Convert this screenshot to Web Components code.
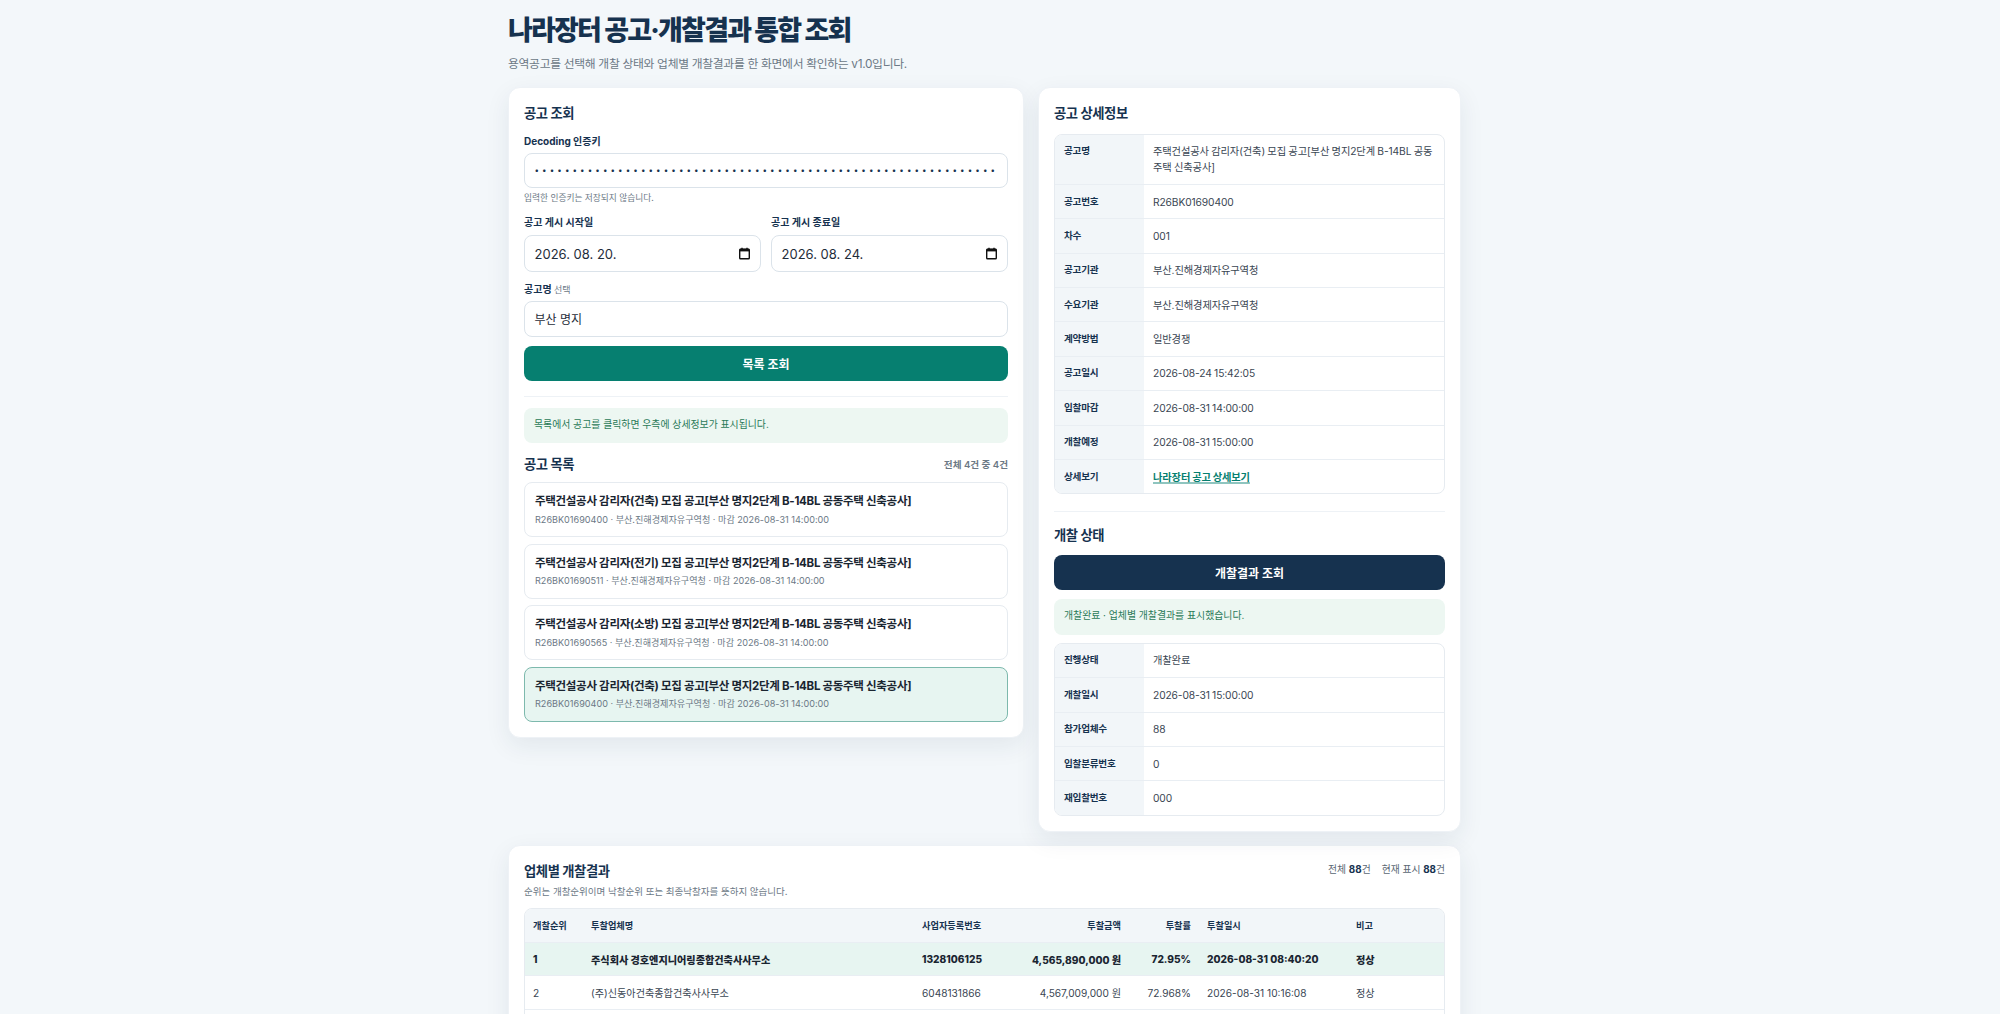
<!doctype html>
<html lang="ko">
<head>
<meta charset="utf-8">
<title>나라장터 공고·개찰결과 통합 조회</title>
<style>
  html { overflow: hidden; }
  body {
    margin: 0;
    background: #f3f7fa;
    color: #1f2d3a;
    font-family: Inter, "Noto Sans CJK KR", sans-serif;
    font-size: 11.5px;
  }
</style>
</head>
<body>
<app-page></app-page>

<script>
class BaseElement extends HTMLElement {
  constructor() {
    super()
    this.attachShadow({mode: 'open'})
  }

  connectedCallback() {
    this.shadowRoot.innerHTML = `<style>${this.constructor.styles}</style>${this.render()}`
  }

  render() {
    return '<slot></slot>'
  }
}

const esc = (text) => String(text).replace(/&/g, '&amp;').replace(/</g, '&lt;')

class UiCard extends BaseElement {
  static styles = `
    :host {
      display: block;
      box-sizing: border-box;
      padding: 15px;
      background: #fff;
      border-radius: 12px;
      border: 1px solid #eef2f6;
      box-shadow: 0 8px 24px rgba(22, 50, 79, .08);
    }
  `
}

class SectionTitle extends BaseElement {
  static styles = `
    :host {
      display: block;
      color: #16324f;
      font-size: 13.3px;
      font-weight: 700;
      line-height: 20px;
      letter-spacing: -.4px;
    }
  `
}

class FieldLabel extends BaseElement {
  static styles = `
    :host {
      display: block;
      color: #16324f;
      font-size: 10px;
      font-weight: 700;
      line-height: 14px;
      margin-bottom: 5px;
    }
    ::slotted(small) { color: #6b7885; font-size: 9px; font-weight: 400; }
  `
}

class TextBox extends BaseElement {
  static styles = `
    :host {
      display: flex;
      align-items: center;
      justify-content: space-between;
      box-sizing: border-box;
      height: 35.5px;
      padding: 0 9.5px;
      background: #fff;
      border: 1px solid #dbe3ea;
      border-radius: 8px;
      color: #1f2d3a;
      font-size: 12px;
    }
    :host([kind="date"]) { height: 37px; margin-top: 6px; font-size: 13px; }
    svg { display: block; flex: none; }
    input {
      width: 100%;
      border: 0;
      padding: 0;
      outline: 0;
      font: 8px Inter, sans-serif;
      letter-spacing: 3.1px;
      color: #16324f;
      background: none;
    }
  `

  render() {
    const kind = this.getAttribute('kind')
    if (kind === 'password') {
      return `<input type="password" readonly value="${'x'.repeat(120)}">`
    }
    if (kind === 'date') {
      return `<slot></slot>
        <svg width="13" height="13" viewBox="0 0 13 13" fill="none" stroke="#111" stroke-width="1.4">
          <rect x="1.7" y="2.2" width="9.6" height="9.6" rx=".8"/>
          <rect x="1.7" y="1.8" width="9.6" height="2.6" fill="#111" stroke="none"/>
          <path d="M4 .8v1.6M9 .8v1.6"/>
        </svg>`
    }
    return '<slot></slot>'
  }
}

class NoticeBox extends BaseElement {
  static styles = `
    :host {
      display: block;
      box-sizing: border-box;
      height: 35.5px;
      padding: 8px 10px;
      background: #edf7f2;
      border-radius: 8px;
      color: #2a7a58;
      font-size: 9.9px;
      line-height: 16px;
    }
  `
}

class ActionButton extends BaseElement {
  static styles = `
    :host { display: block; }
    button {
      display: block;
      width: 100%;
      height: 35px;
      border: 0;
      border-radius: 8px;
      background: var(--btn, #067f70);
      color: #fff;
      font: 700 12px Inter, "Noto Sans CJK KR", sans-serif;
    }
  `

  render() {
    return '<button type="button"><slot></slot></button>'
  }
}

class NoticeItem extends BaseElement {
  static styles = `
    :host {
      display: block;
      box-sizing: border-box;
      height: 55px;
      padding: 9px 10px;
      background: #fff;
      border: 1px solid #e6ebf0;
      border-radius: 8px;
    }
    :host([selected]) { background: #e7f5f1; border-color: #7db9ad; }
    .name { color: #1a2531; font-size: 11.5px; font-weight: 700; line-height: 18px; letter-spacing: -.3px; }
    .meta { color: #6b7885; font-size: 9.1px; line-height: 14px; margin-top: 2.5px; }
  `

  render() {
    const name = esc(this.getAttribute('name'))
    const meta = esc(this.getAttribute('meta'))
    return `<div class="name">${name}</div><div class="meta">${meta}</div>`
  }
}

class InfoTable extends BaseElement {
  static styles = `
    :host {
      display: block;
      overflow: hidden;
      border: 1px solid #e6ebf0;
      border-radius: 8px;
      background: #fff;
    }
  `
}

class InfoRow extends BaseElement {
  static styles = `
    :host {
      display: grid;
      grid-template-columns: 89px 1fr;
      border-bottom: 1px solid #e9eef3;
    }
    :host(:last-child) { border-bottom: 0; }
    .key {
      padding: 8.7px 9px;
      background: #f2f6f9;
      color: #16324f;
      font-size: 9.6px;
      font-weight: 700;
      line-height: 16px;
      letter-spacing: -.25px;
    }
    .val {
      padding: 8.7px 9px;
      color: #3a4653;
      font-size: 10.25px;
      line-height: 16px;
      letter-spacing: -.12px;
      word-spacing: -.4px;
    }
    ::slotted(a) {
      color: #067f70;
      font-weight: 700;
      text-decoration: underline;
      text-decoration-color: rgba(6, 127, 112, .45);
      text-decoration-thickness: 2px;
    }
  `

  render() {
    return `<div class="key">${esc(this.getAttribute('key'))}</div><div class="val"><slot></slot></div>`
  }
}

class ResultTable extends BaseElement {
  static styles = `
    :host {
      display: block;
      overflow: hidden;
      border: 1px solid #e6ebf0;
      border-radius: 8px;
    }
    table { width: 100%; border-collapse: collapse; table-layout: fixed; }
    th, td {
      box-sizing: border-box;
      height: 33.8px;
      padding: 0 8px;
      border-bottom: 1px solid #e9eef3;
      text-align: left;
      font-size: 10.15px;
      white-space: nowrap;
    }
    th { height: 33px; background: #f2f6f9; color: #16324f; font-size: 9.2px; font-weight: 700; }
    td { color: #3a4653; }
    tr.top td { background: #e7f5f1; color: #1a2531; font-weight: 800; }
    .num { text-align: right; }
  `

  render() {
    const cols = [58, 331, 100, 115, 70, 149]
    const heads = ['개찰순위', '투찰업체명', '사업자등록번호', '투찰금액', '투찰률', '투찰일시', '비고']
    const rows = [
      ['1', '주식회사 경호엔지니어링종합건축사사무소', '1328106125', '4,565,890,000 원', '72.95%', '2026-08-31 08:40:20', '정상'],
      ['2', '(주)신동아건축종합건축사사무소', '6048131866', '4,567,009,000 원', '72.968%', '2026-08-31 10:16:08', '정상'],
      ['', '', '', '', '', '', ''],
    ]
    const isNum = (i) => i === 3 || i === 4
    return `<table>
      <colgroup>${cols.map((w) => `<col style="width:${w}px">`).join('')}<col></colgroup>
      <tr>${heads.map((h, i) => `<th class="${isNum(i) ? 'num' : ''}">${h}</th>`).join('')}</tr>
      ${rows.map((row, r) => `<tr class="${r === 0 ? 'top' : ''}">
        ${row.map((c, i) => `<td class="${isNum(i) ? 'num' : ''}">${esc(c)}</td>`).join('')}
      </tr>`).join('')}
    </table>`
  }
}

class AppPage extends BaseElement {
  static styles = `
    :host {
      display: block;
      box-sizing: border-box;
      width: 953px;
      margin-left: 508px;
      padding-top: 13px;
    }
    h1 {
      margin: 0;
      color: #16324f;
      font-size: 27px;
      font-weight: 800;
      line-height: 36px;
      letter-spacing: -1.8px;
    }
    .sub { margin: 6px 0 0; color: #6b7885; font-size: 11.8px; line-height: 18px; height: 19px; letter-spacing: -.31px; }
    .columns {
      display: grid;
      grid-template-columns: 516px 423px;
      gap: 14px;
      align-items: start;
      margin-top: 13px;
    }
    .stack > section-title { margin-bottom: 10.5px; }
    .gap { margin-top: 10px; }
    .dates { display: grid; grid-template-columns: 1fr 1fr; gap: 10px; }
    .dates field-label { margin-bottom: 0; }
    .name-field field-label { margin-bottom: 4px; }
    .search { margin-top: 9px; }
    hr { border: 0; border-top: 1px solid #eef2f6; margin: 15px 0 11px; }
    .list-head { display: flex; justify-content: space-between; align-items: center; margin: 11px 0 8px; }
    .count { color: #6b7885; font-size: 9.6px; font-weight: 600; }
    .items { display: grid; gap: 6.6px; }
    .hint { color: #6b7885; font-size: 8.7px; line-height: 14px; margin-top: 3px; }
    .results { margin-top: 13px; }
    .results-head { display: flex; justify-content: space-between; align-items: flex-start; }
    .results-sub { color: #6b7885; font-size: 9.5px; line-height: 16px; margin-top: 3.5px; }
    .totals { display: flex; gap: 11px; color: #5a6773; font-size: 9.8px; line-height: 14px; margin-top: 2px; }
    .totals b { color: #16324f; }
    .results result-table { margin-top: 8px; }
    .dark { --btn: #16324f; }
  `

  render() {
    const nameA = '주택건설공사 감리자(건축) 모집 공고[부산 명지2단계 B-14BL 공동주택 신축공사]'
    const nameB = '주택건설공사 감리자(전기) 모집 공고[부산 명지2단계 B-14BL 공동주택 신축공사]'
    const nameC = '주택건설공사 감리자(소방) 모집 공고[부산 명지2단계 B-14BL 공동주택 신축공사]'
    const meta = (no) => `${no} · 부산.진해경제자유구역청 · 마감 2026-08-31 14:00:00`
    return `
      <h1>나라장터 공고·개찰결과 통합 조회</h1>
      <p class="sub">용역공고를 선택해 개찰 상태와 업체별 개찰결과를 한 화면에서 확인하는 v1.0입니다.</p>

      <div class="columns">
        <ui-card class="stack">
          <section-title>공고 조회</section-title>
          <field-label>Decoding 인증키</field-label>
          <text-box kind="password"></text-box>
          <div class="hint">입력한 인증키는 저장되지 않습니다.</div>
          <div class="dates gap">
            <div>
              <field-label>공고 게시 시작일</field-label>
              <text-box kind="date">2026. 08. 20.</text-box>
            </div>
            <div>
              <field-label>공고 게시 종료일</field-label>
              <text-box kind="date">2026. 08. 24.</text-box>
            </div>
          </div>
          <div class="gap name-field">
            <field-label>공고명 <small>선택</small></field-label>
            <text-box>부산 명지</text-box>
          </div>
          <action-button class="search">목록 조회</action-button>
          <hr>
          <notice-box>목록에서 공고를 클릭하면 우측에 상세정보가 표시됩니다.</notice-box>
          <div class="list-head">
            <section-title style="margin:0">공고 목록</section-title>
            <span class="count">전체 4건 중 4건</span>
          </div>
          <div class="items">
            <notice-item name="${nameA}" meta="${meta('R26BK01690400')}"></notice-item>
            <notice-item name="${nameB}" meta="${meta('R26BK01690511')}"></notice-item>
            <notice-item name="${nameC}" meta="${meta('R26BK01690565')}"></notice-item>
            <notice-item selected name="${nameA}" meta="${meta('R26BK01690400')}"></notice-item>
          </div>
        </ui-card>

        <ui-card class="stack">
          <section-title>공고 상세정보</section-title>
          <info-table>
            <info-row key="공고명">${nameA}</info-row>
            <info-row key="공고번호">R26BK01690400</info-row>
            <info-row key="차수">001</info-row>
            <info-row key="공고기관">부산.진해경제자유구역청</info-row>
            <info-row key="수요기관">부산.진해경제자유구역청</info-row>
            <info-row key="계약방법">일반경쟁</info-row>
            <info-row key="공고일시">2026-08-24 15:42:05</info-row>
            <info-row key="입찰마감">2026-08-31 14:00:00</info-row>
            <info-row key="개찰예정">2026-08-31 15:00:00</info-row>
            <info-row key="상세보기"><a href="#">나라장터 공고 상세보기</a></info-row>
          </info-table>
          <hr style="margin:17px 0 13px">
          <section-title style="margin-bottom:10px">개찰 상태</section-title>
          <action-button class="dark">개찰결과 조회</action-button>
          <notice-box style="margin:9px 0 8px">개찰완료 · 업체별 개찰결과를 표시했습니다.</notice-box>
          <info-table>
            <info-row key="진행상태">개찰완료</info-row>
            <info-row key="개찰일시">2026-08-31 15:00:00</info-row>
            <info-row key="참가업체수">88</info-row>
            <info-row key="입찰분류번호">0</info-row>
            <info-row key="재입찰번호">000</info-row>
          </info-table>
        </ui-card>
      </div>

      <ui-card class="results">
        <div class="results-head">
          <div>
            <section-title>업체별 개찰결과</section-title>
            <div class="results-sub">순위는 개찰순위이며 낙찰순위 또는 최종낙찰자를 뜻하지 않습니다.</div>
          </div>
          <div class="totals"><span>전체 <b>88</b>건</span><span>현재 표시 <b>88</b>건</span></div>
        </div>
        <result-table></result-table>
      </ui-card>
    `
  }
}

customElements.define('ui-card', UiCard)
customElements.define('section-title', SectionTitle)
customElements.define('field-label', FieldLabel)
customElements.define('text-box', TextBox)
customElements.define('notice-box', NoticeBox)
customElements.define('action-button', ActionButton)
customElements.define('notice-item', NoticeItem)
customElements.define('info-table', InfoTable)
customElements.define('info-row', InfoRow)
customElements.define('result-table', ResultTable)
customElements.define('app-page', AppPage)
</script>
</body>
</html>
